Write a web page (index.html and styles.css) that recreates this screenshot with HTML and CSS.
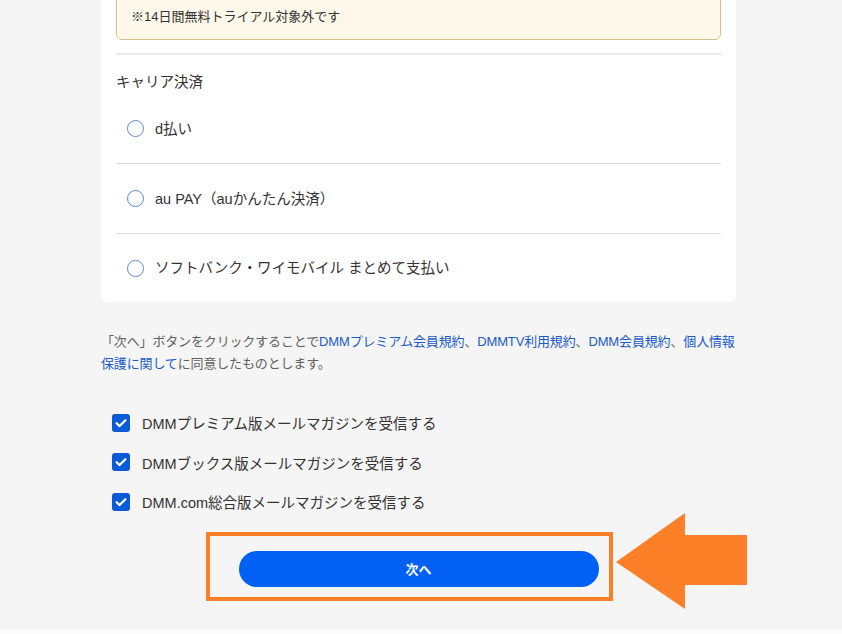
FILE: index.html
```html
<!DOCTYPE html>
<html lang="ja">
<head>
<meta charset="utf-8">
<title>お支払い方法</title>
<link rel="stylesheet" href="styles.css">
</head>
<body>
<div class="page">
  <div class="card">
    <div class="notice">※14日間無料トライアル対象外です</div>
    <div class="divider"></div>
    <div class="section-title">キャリア決済</div>
    <ul class="options">
      <li class="option"><span class="radio"></span><span>d払い</span></li>
      <li class="option"><span class="radio"></span><span>au PAY（auかんたん決済）</span></li>
      <li class="option"><span class="radio"></span><span>ソフトバンク・ワイモバイル まとめて支払い</span></li>
    </ul>
  </div>

  <p class="agree">「次へ」ボタンをクリックすることで<a href="#">DMMプレミアム会員規約</a>、<a href="#">DMMTV利用規約</a>、<a href="#">DMM会員規約</a>、<a href="#">個人情報<br>保護に関して</a>に同意したものとします。</p>

  <ul class="checks">
    <li class="check"><span class="box"><svg viewBox="0 0 18 18" width="18" height="18"><path d="M4.6 9.2 L7.6 12.1 L13.4 6.2" fill="none" stroke="#fff" stroke-width="2.2" stroke-linecap="round" stroke-linejoin="round"/></svg></span><span>DMMプレミアム版メールマガジンを受信する</span></li>
    <li class="check"><span class="box"><svg viewBox="0 0 18 18" width="18" height="18"><path d="M4.6 9.2 L7.6 12.1 L13.4 6.2" fill="none" stroke="#fff" stroke-width="2.2" stroke-linecap="round" stroke-linejoin="round"/></svg></span><span>DMMブックス版メールマガジンを受信する</span></li>
    <li class="check"><span class="box"><svg viewBox="0 0 18 18" width="18" height="18"><path d="M4.6 9.2 L7.6 12.1 L13.4 6.2" fill="none" stroke="#fff" stroke-width="2.2" stroke-linecap="round" stroke-linejoin="round"/></svg></span><span>DMM.com総合版メールマガジンを受信する</span></li>
  </ul>

  <div class="actions">
    <button class="next" type="button">次へ</button>
  </div>
</div>
<div class="footer"></div>

<div class="highlight"></div>
<svg class="arrow" width="134" height="96" viewBox="0 0 134 96">
  <polygon points="0,49 69,0 69,22 131,22 131,72 69,72 69,96" fill="#fd8028"/>
</svg>
</body>
</html>
```
FILE: styles.css
```css
html, body {
  margin: 0;
  padding: 0;
}
body {
  background: #f5f5f5;
  font-family: "Liberation Sans", "Noto Sans CJK JP", sans-serif;
  color: #333;
  overflow: hidden;
  height: 634px;
  position: relative;
}
.page {
  width: 635px;
  margin: -30px 0 0 101px;
}
.card {
  background: #fff;
  border-radius: 0 0 6px 6px;
  padding: 16px 15px 0;
}
.notice {
  background: #fdf8e9;
  border: 1px solid #d8c08a;
  border-radius: 6px;
  padding: 20px 14px 12px;
  font-size: 13px;
  line-height: 20px;
  color: #333;
}
.divider {
  height: 2px;
  background: #e9e9e9;
  margin-top: 13px;
}
.section-title {
  margin-top: 16px;
  font-size: 14.5px;
  line-height: 22px;
  margin-bottom: 1px;
}
.options {
  list-style: none;
  margin: 0;
  padding: 0;
}
.option {
  display: flex;
  align-items: center;
  gap: 11px;
  height: 66px;
  padding-bottom: 3px;
  border-bottom: 1px solid #dedede;
  font-size: 14.5px;
  padding-left: 11px;
}
.option .radio {
  margin-top: 3px;
}
.option:last-child {
  border-bottom: none;
  height: 65px;
}
.radio {
  width: 15px;
  height: 15px;
  border: 1.5px solid #5b88d4;
  border-radius: 50%;
  flex: none;
}
.agree {
  margin: 29px 0 0;
  font-size: 13px;
  line-height: 22px;
  color: #606060;
  white-space: nowrap;
  letter-spacing: -0.15px;
}
.agree a {
  color: #1c5ac8;
  text-decoration: none;
}
.checks {
  list-style: none;
  margin: 28px 0 0;
  padding: 0 0 0 11px;
}
.check {
  display: flex;
  align-items: center;
  gap: 12px;
  height: 39.5px;
  font-size: 14.5px;
}
.box {
  width: 18px;
  height: 18px;
  background: #0b5bd8;
  border-radius: 3px;
  flex: none;
  display: flex;
}
.actions {
  display: flex;
  justify-content: center;
  margin-top: 29px;
}
.next {
  width: 360px;
  height: 36px;
  border: none;
  border-radius: 18px;
  background: #0060f4;
  color: #fff;
  font-family: "Liberation Sans", "Noto Sans CJK JP", sans-serif;
  font-weight: bold;
  font-size: 13px;
}
.footer {
  position: absolute;
  left: 0;
  right: 0;
  bottom: 0;
  height: 5px;
  background: #fbfbfb;
}
.highlight {
  position: absolute;
  left: 206px;
  top: 532px;
  width: 399px;
  height: 61px;
  border: 4px solid #fd8028;
}
.arrow {
  position: absolute;
  left: 616px;
  top: 513px;
}
```
